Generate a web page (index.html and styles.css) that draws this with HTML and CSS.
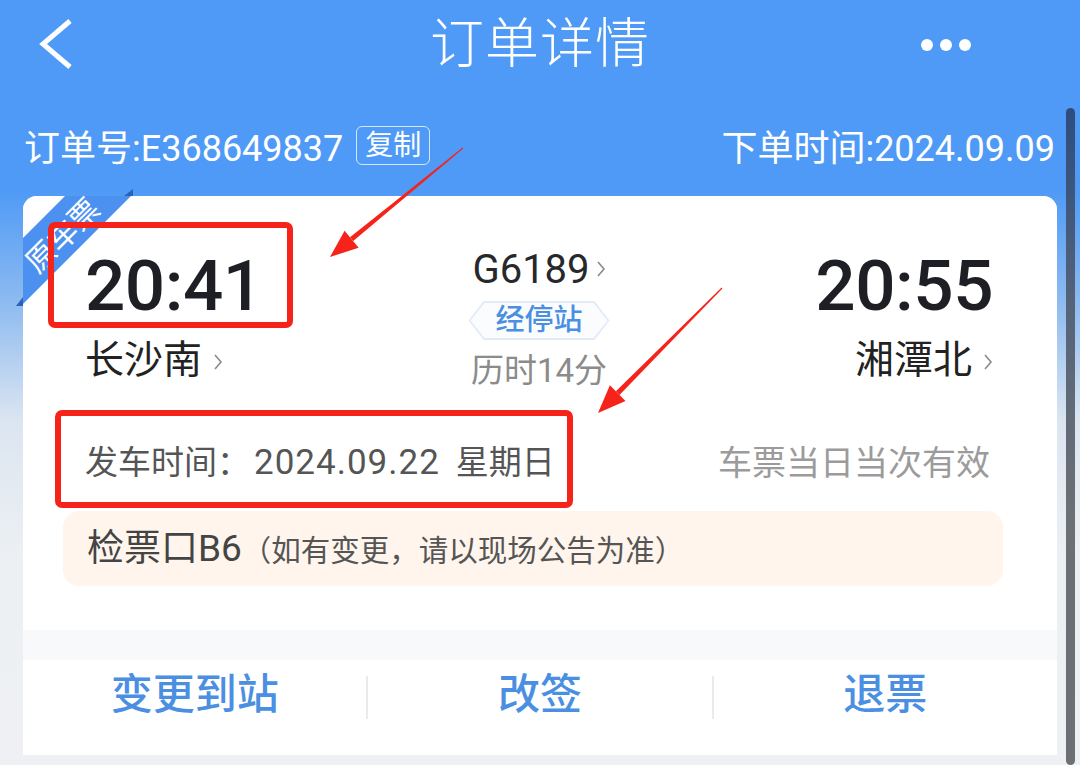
FILE: index.html
```html
<!DOCTYPE html>
<html lang="zh-CN">
<head>
<meta charset="utf-8">
<title>订单详情</title>
<link rel="stylesheet" href="styles.css">
</head>
<body>
<div class="page">
    <header class="nav">
        <a class="nav-back"><svg width="40" height="56" viewBox="0 0 40 56"><polyline points="32,4 5,27 32,50" fill="none" stroke="#fff" stroke-width="5"/></svg></a>
        <h1 class="nav-title">订单详情</h1>
        <div class="nav-more"><i></i><i></i><i></i></div>
    </header>

    <div class="order-bar">
        <div class="order-no">订单号:E368649837<span class="copy">复制</span></div>
        <div class="order-time">下单时间:2024.09.09</div>
    </div>

    <div class="card">
        <div class="card-main">
            <svg class="ribbon" width="130" height="130" viewBox="-12 -12 130 130">
                <polygon points="42,0 108,0 0,108 0,42" fill="#4c91f0"/>
                <polygon points="101,0 110,-7 110,0" fill="#2c62b6"/>
                <polygon points="0,101 -7,110 0,110" fill="#2c62b6"/>
                <text x="0" y="0" transform="translate(38,38) rotate(-45)" text-anchor="middle" dominant-baseline="central">原车票</text>
            </svg>

            <div class="trip">
                <div class="stop">
                    <div class="time">20:41</div>
                    <div class="station">长沙南<svg class="arrow" width="10" height="18" viewBox="0 0 10 18"><polyline points="2,2 8,9 2,16" fill="none" stroke="#8a8a8a" stroke-width="1.6"/></svg></div>
                </div>
                <div class="train">
                    <div class="train-no">G6189<svg class="arrow" width="10" height="18" viewBox="0 0 10 18"><polyline points="2,2 8,9 2,16" fill="none" stroke="#8a8a8a" stroke-width="1.6"/></svg></div>
                    <div class="badge"><span>经停站</span></div>
                    <div class="duration">历时14分</div>
                </div>
                <div class="stop stop-end">
                    <div class="time">20:55</div>
                    <div class="station">湘潭北<svg class="arrow" width="10" height="18" viewBox="0 0 10 18"><polyline points="2,2 8,9 2,16" fill="none" stroke="#8a8a8a" stroke-width="1.6"/></svg></div>
                </div>
            </div>

            <div class="depart">
                <span>发车时间：<span class="date">2024.09.22</span>星期日</span>
                <span class="valid">车票当日当次有效</span>
            </div>

            <div class="notice">检票口B6<small>（如有变更，请以现场公告为准）</small></div>
        </div>

        <div class="actions">
            <a>变更到站</a>
            <i class="sep"></i>
            <a>改签</a>
            <i class="sep"></i>
            <a>退票</a>
        </div>
    </div>

    <!-- 标注 -->
    <svg class="marks" width="1080" height="765" viewBox="0 0 1080 765">
        <rect x="51" y="225" width="239" height="100" rx="4" fill="none" stroke="#f5231a" stroke-width="6"/>
        <rect x="58" y="413" width="512" height="92" rx="4" fill="none" stroke="#f5231a" stroke-width="6"/>
        <polygon points="463.3,148.4 462.7,147.6 350.0,237.3 353.2,241.1" fill="#f5231a"/>
        <polygon points="330,257 358.6,247.7 344.6,230.7" fill="#f5231a"/>
        <polygon points="722.4,288.4 721.6,287.6 615.9,391.3 619.5,394.9" fill="#f5231a"/>
        <polygon points="598,413 625.5,400.9 609.9,385.3" fill="#f5231a"/>
    </svg>
    <div class="scrollbar"></div>
</div>
</body>
</html>
```

FILE: styles.css
```css
body,div,h1,a{margin:0;padding:0;}
body{font-family:Roboto,"Noto Sans CJK SC",sans-serif;background:#eef0f3;}
a{text-decoration:none;}
i{font-style:normal;}

.page{position:relative;width:1080px;height:765px;overflow:hidden;background:linear-gradient(180deg,#4f9af6 0,#4f9af6 190px,#8cbaf0 300px,#dbe5f1 420px,#edf0f3 560px,#eef0f3 100%);}

.nav{display:grid;grid-template-columns:1fr auto 1fr;align-items:center;height:90px;}
.nav-back{display:flex;align-items:center;padding-left:38px;}
.nav-title{font-size:54px;line-height:90px;font-weight:300;color:#fff;letter-spacing:1px;}
.nav-more{display:flex;justify-content:flex-end;gap:7px;padding-right:109px;}
.nav-more i{width:12px;height:12px;border-radius:50%;background:#fff;}

.order-bar{display:flex;justify-content:space-between;align-items:center;height:50px;margin-top:30px;padding:0 25px 0 24px;color:#fff;font-size:36px;}
.order-no{display:flex;align-items:center;}
.copy{display:inline-block;margin-left:13px;padding:0 8px;height:37px;line-height:37px;font-size:28px;border:1.5px solid rgba(255,255,255,0.75);border-radius:6px;}

.card{margin:26px 23px 0;background:linear-gradient(180deg,#eff1f3 0,#f8f9fa 30px);border-radius:14px 14px 0 0;}
.card-main{position:relative;padding:50px 64px 44px 62px;background:#fff;border-radius:14px 14px 0 0;}
.ribbon{position:absolute;left:-12px;top:-12px;}
.ribbon text{font-size:30px;fill:#fff;font-family:"Noto Sans CJK SC",sans-serif;}

.trip{display:flex;justify-content:space-between;align-items:flex-start;}
.stop{width:260px;}
.stop-end{text-align:right;}
.time{font-size:71px;line-height:80px;font-weight:500;color:#1d1f25;letter-spacing:-0.5px;}
.station{margin-top:10px;font-size:39px;line-height:48px;color:#222;}
.arrow{margin-left:11px;vertical-align:2px;}

.train{display:flex;flex-direction:column;align-items:center;padding-top:1px;}
.train-no{font-size:40px;line-height:46px;color:#26282c;}
.train-no .arrow{margin-left:6px;vertical-align:5px;}
.badge{margin-top:8px;padding:2px;background:#e2ebf7;clip-path:polygon(15px 0,calc(100% - 15px) 0,100% 50%,calc(100% - 15px) 100%,15px 100%,0 50%);}
.badge span{display:block;padding:0 25px;height:35px;line-height:35px;font-size:29px;font-weight:500;color:#4a8fe2;background:#fbfcfe;clip-path:polygon(14px 0,calc(100% - 14px) 0,100% 50%,calc(100% - 14px) 100%,14px 100%,0 50%);}
.duration{margin-top:9px;font-size:33px;line-height:44px;color:#8b8b8b;}

.depart{display:flex;justify-content:space-between;align-items:center;margin-top:42px;height:50px;font-size:33px;color:#555;}
.depart .date{margin:0 16px 0 4px;font-size:35px;letter-spacing:1px;}
.depart .valid{font-size:34px;color:#9b9b9b;margin-right:3px;}

.notice{margin:26px -10px 0 -22px;padding-left:24px;height:75px;line-height:75px;background:#fff5ec;border-radius:16px;font-size:37px;color:#444;}
.notice small{font-size:29.5px;color:#555;}

.actions{display:flex;margin-top:30px;height:95px;padding-top:7px;box-sizing:border-box;background:#fff;}
.actions a{flex:1;text-align:center;font-size:42px;line-height:56px;font-weight:500;color:#4a8fe2;}
.actions .sep{width:2px;height:43px;margin-top:9px;background:#e8eaed;}

.marks{position:absolute;left:0;top:0;pointer-events:none;}
.scrollbar{position:absolute;left:1066px;top:108px;bottom:0;width:9px;border-radius:5px;background:linear-gradient(180deg,#2d4c7e 0,#55647a 200px,#6c6f74 400px);}
```
